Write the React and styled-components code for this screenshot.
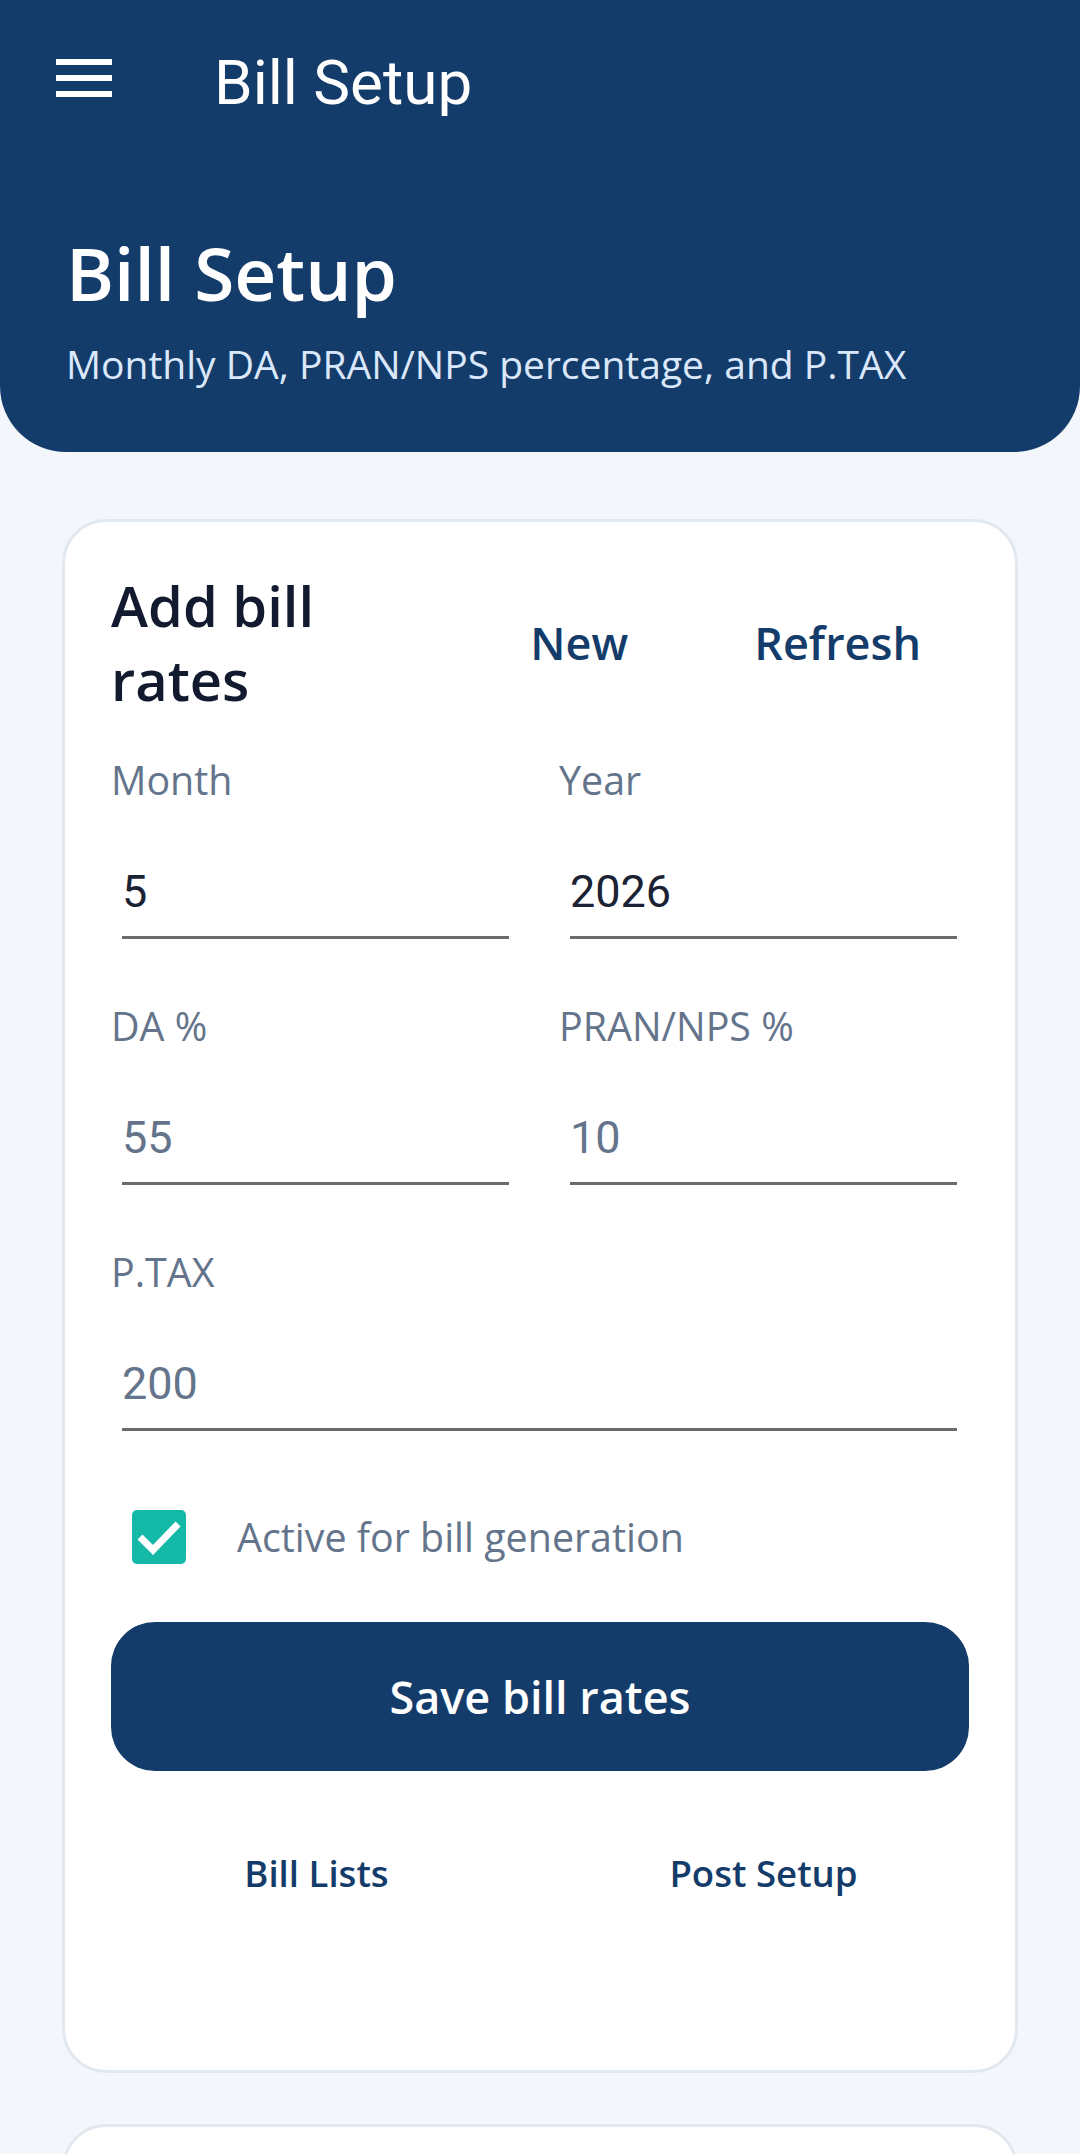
import React from "react";
import styled, { createGlobalStyle } from "styled-components";

const GlobalStyle = createGlobalStyle`
  * { box-sizing: border-box; }
  html, body { margin: 0; padding: 0; }
  body {
    background: #f3f6fa;
    font-family: "Open Sans", "Noto Sans", sans-serif;
    -webkit-font-smoothing: antialiased;
  }
`;

const Page = styled.div`
  min-height: 2154px;
  background: #f3f6fa;
`;

const Header = styled.header`
  background: #143c6a;
  border-radius: 0 0 66px 66px;
  color: #ffffff;
`;

const AppBar = styled.div`
  height: 156px;
  display: flex;
  align-items: center;
  padding-left: 56px;
`;

const MenuButton = styled.button`
  display: flex;
  align-items: center;
  justify-content: center;
  padding: 0;
  border: none;
  background: transparent;
  width: 56px;
  height: 38px;
  cursor: pointer;
`;

const AppTitle = styled.h1`
  margin: 0 0 0 102px;
  padding-top: 9px;
  font-family: Roboto, "Liberation Sans", sans-serif;
  font-weight: 400;
  font-size: 62px;
  line-height: 70px;
  color: #ffffff;
`;

const Hero = styled.div`
  padding: 72px 66px 61px;
`;

const HeroTitle = styled.h2`
  margin: 0;
  font-size: 73px;
  line-height: 89px;
  font-weight: 600;
  color: #ffffff;
`;

const HeroSubtitle = styled.p`
  margin: 20px 0 0;
  font-size: 39px;
  line-height: 54px;
  font-weight: 400;
  color: #dbe8fb;
  white-space: nowrap;
`;

const Content = styled.main`
  padding: 67px 62px 0;
  display: flex;
  flex-direction: column;
  gap: 51px;
`;

const Card = styled.section`
  background: #ffffff;
  border: 3px solid #e2e8f0;
  border-radius: 44px;
  padding: 46px;
  min-height: ${(p) => (p.$minHeight ? `${p.$minHeight}px` : "auto")};
`;

const CardHeader = styled.div`
  display: flex;
  align-items: center;
`;

const CardTitle = styled.h3`
  margin: 0;
  flex: 1;
  max-width: 300px;
  font-size: 56px;
  line-height: 74px;
  font-weight: 600;
  color: #111a2e;
`;

const Actions = styled.div`
  margin-left: auto;
  margin-right: 8px;
  display: flex;
  gap: 46px;
`;

const TextButton = styled.button`
  border: none;
  background: transparent;
  padding: 0 ${(p) => p.$padX ?? 40}px;
  height: ${(p) => p.$height ?? 100}px;
  font-family: "Open Sans", "Noto Sans", sans-serif;
  font-weight: 600;
  font-size: ${(p) => p.$size ?? 45}px;
  color: #143c6a;
  cursor: pointer;
  white-space: nowrap;
`;

const FormGrid = styled.div`
  margin-top: 37px;
  display: grid;
  grid-template-columns: 1fr 1fr;
  column-gap: 38px;
  row-gap: 60px;
`;

const Field = styled.div`
  display: flex;
  flex-direction: column;
  grid-column: ${(p) => (p.$full ? "1 / span 2" : "auto")};
`;

const Label = styled.label`
  font-size: 39.4px;
  line-height: 54px;
  color: #64748b;
`;

const InputWrap = styled.div`
  padding: 0 12px 0 11px;
`;

const Input = styled.input`
  display: block;
  width: 100%;
  box-sizing: content-box;
  height: 52px;
  padding: 59px 0 18px;
  margin: 0;
  border: none;
  border-bottom: 3px solid #6b6b6b;
  border-radius: 0;
  background: transparent;
  outline: none;
  font-family: Roboto, "Liberation Sans", sans-serif;
  font-size: 45px;
  line-height: 52px;
  color: ${(p) => (p.$muted ? "#64748b" : "#1a2233")};
`;

const CheckRow = styled.label`
  margin-top: 79px;
  height: 54px;
  display: flex;
  align-items: center;
  gap: 51px;
  padding-left: 21px;
  font-size: 39.4px;
  line-height: 54px;
  color: #64748b;
`;

const CheckBox = styled.span`
  width: 54px;
  height: 54px;
  border-radius: 5px;
  background: #14b8a6;
  display: flex;
  align-items: center;
  justify-content: center;
  flex-shrink: 0;
`;

const SaveButton = styled.button`
  margin-top: 58px;
  width: 100%;
  height: 149px;
  border: none;
  border-radius: 44px;
  background: #143c6a;
  color: #ffffff;
  font-family: "Open Sans", "Noto Sans", sans-serif;
  font-size: 45px;
  font-weight: 600;
  cursor: pointer;
`;

const LinkRow = styled.div`
  margin-top: 36px;
  margin-bottom: 85px;
  display: grid;
  grid-template-columns: 1fr 1fr;
  column-gap: 36px;
`;

const MenuIcon = () => (
  <svg width="56" height="38" viewBox="0 0 56 38" aria-hidden="true">
    <rect x="0" y="0" width="56" height="6" fill="#ffffff" />
    <rect x="0" y="16" width="56" height="6" fill="#ffffff" />
    <rect x="0" y="32" width="56" height="6" fill="#ffffff" />
  </svg>
);

const CheckIcon = () => (
  <svg width="54" height="54" viewBox="0 0 54 54" aria-hidden="true">
    <path
      d="M8 27 L21 40 L46 14"
      fill="none"
      stroke="#ffffff"
      strokeWidth="7"
      strokeLinecap="butt"
      strokeLinejoin="miter"
    />
  </svg>
);

const fields = [
  { label: "Month", value: "5" },
  { label: "Year", value: "2026" },
  { label: "DA %", value: "55", muted: true },
  { label: "PRAN/NPS %", value: "10", muted: true },
  { label: "P.TAX", value: "200", muted: true, full: true },
];

export default function App() {
  return (
    <>
      <GlobalStyle />
      <Page>
        <Header>
          <AppBar>
            <MenuButton aria-label="Menu">
              <MenuIcon />
            </MenuButton>
            <AppTitle>Bill Setup</AppTitle>
          </AppBar>
          <Hero>
            <HeroTitle>Bill Setup</HeroTitle>
            <HeroSubtitle>Monthly DA, PRAN/NPS percentage, and P.TAX</HeroSubtitle>
          </Hero>
        </Header>
        <Content>
          <Card>
            <CardHeader>
              <CardTitle>Add bill rates</CardTitle>
              <Actions>
                <TextButton>New</TextButton>
                <TextButton>Refresh</TextButton>
              </Actions>
            </CardHeader>
            <FormGrid>
              {fields.map((f) => (
                <Field key={f.label} $full={f.full}>
                  <Label>{f.label}</Label>
                  <InputWrap>
                    <Input readOnly value={f.value} $muted={f.muted} />
                  </InputWrap>
                </Field>
              ))}
            </FormGrid>
            <CheckRow>
              <CheckBox>
                <CheckIcon />
              </CheckBox>
              Active for bill generation
            </CheckRow>
            <SaveButton>Save bill rates</SaveButton>
            <LinkRow>
              <TextButton $size={36.6} $height={132} $padX={0}>Bill Lists</TextButton>
              <TextButton $size={36.6} $height={132} $padX={0}>Post Setup</TextButton>
            </LinkRow>
          </Card>
          <Card $minHeight={400} />
        </Content>
      </Page>
    </>
  );
}
